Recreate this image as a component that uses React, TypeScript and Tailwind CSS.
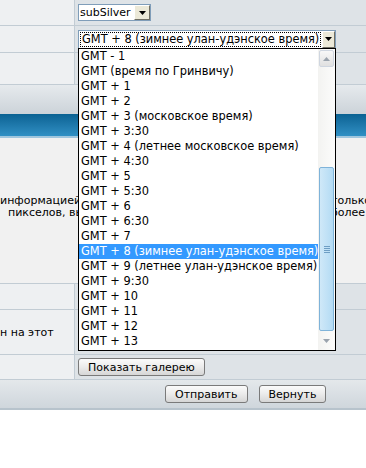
import React from "react";

const zones = [
  "GMT - 1",
  "GMT (время по Гринвичу)",
  "GMT + 1",
  "GMT + 2",
  "GMT + 3 (московское время)",
  "GMT + 3:30",
  "GMT + 4 (летнее московское время)",
  "GMT + 4:30",
  "GMT + 5",
  "GMT + 5:30",
  "GMT + 6",
  "GMT + 6:30",
  "GMT + 7",
  "GMT + 8 (зимнее улан-удэнское время)",
  "GMT + 9 (летнее улан-удэнское время)",
  "GMT + 9:30",
  "GMT + 10",
  "GMT + 11",
  "GMT + 12",
  "GMT + 13",
];

function ArrowBtn() {
  return (
    <div className="w-[16px] h-full bg-[#ece9d8] border border-t-white border-l-white border-r-[#716f64] border-b-[#716f64] flex items-center justify-center">
      <svg width="7" height="4" viewBox="0 0 7 4">
        <path d="M0 0h7L3.5 4z" fill="#000" />
      </svg>
    </div>
  );
}

function Btn({ label }: { label: string }) {
  return (
    <button className="h-[18px] px-[9px] rounded-[3px] border border-[#7a7a7a] bg-gradient-to-b from-[#fbfbfb] via-[#ebebeb] to-[#d6d6d6] text-[11px] leading-none text-black">
      {label}
    </button>
  );
}

function Row({
  h,
  left = "bg-[#eef0f2]",
  right = "bg-[#dee3e7]",
  children,
  leftContent,
}: {
  h: string;
  left?: string;
  right?: string;
  children?: React.ReactNode;
  leftContent?: React.ReactNode;
}) {
  return (
    <div className={`flex ${h} border-b border-[#c2ccd4]`}>
      <div className={`w-[74px] shrink-0 ${left} flex items-center whitespace-nowrap`}>
        {leftContent}
      </div>
      <div className="w-px bg-[#c2ccd4]" />
      <div className={`flex-1 ${right} flex items-center pl-[3px]`}>{children}</div>
    </div>
  );
}

export default function App() {
  return (
    <div className="relative w-[366px] h-[468px] bg-white overflow-hidden text-[11px] text-black [font-family:'DejaVu_Sans',Verdana,sans-serif]">
      <Row h="h-[26px]">
        <div className="flex h-[17px] w-[73px] border border-[#7f9db9] bg-white">
          <span className="flex-1 pl-[1px] leading-[15px]">subSilver</span>
          <ArrowBtn />
        </div>
      </Row>
      <Row h="h-[27px]">
        <div className="flex h-[19px] w-[258px] border border-[#7f9db9] bg-white">
          <span className="flex-1 m-[1px] px-[1px] border border-dotted border-black leading-[13px] text-[11.4px] whitespace-nowrap">
            GMT + 8 (зимнее улан-удэнское время)
          </span>
          <ArrowBtn />
        </div>
      </Row>
      <Row h="h-[32px]" />

      <div className="h-[29px] bg-gradient-to-b from-[#e6eaed] to-[#ccd3d9]" />
      <div className="h-[24px] bg-gradient-to-b from-[#0a6293] to-[#3090c4] border-b-2 border-[#9fc6de]" />

      <div className="flex h-[146px] bg-[#f1f1f1] border-b border-[#c2ccd4] pt-[57px] leading-[12px]">
        <div className="w-[78px] flex flex-col whitespace-nowrap">
          <span>информацией</span>
          <span className="pl-[8px]">пикселов, вы</span>
        </div>
        <div className="ml-[253px] flex flex-col whitespace-nowrap">
          <span>только</span>
          <span>более</span>
        </div>
      </div>

      <Row h="h-[26px]" />
      <Row h="h-[45px]" leftContent={<span className="mt-[3px]">н на этот</span>} />
      <Row h="h-[25px]">
        <Btn label="Показать галерею" />
      </Row>

      <div className="h-[30px] bg-gradient-to-b from-[#e4e8eb] to-[#cfd6dc] border-b-2 border-[#b7c3cc] flex items-center pl-[165px] gap-[11px]">
        <Btn label="Отправить" />
        <Btn label="Вернуть" />
      </div>

      {/* open dropdown list */}
      <div className="absolute left-[78px] top-[48px] w-[258px] h-[303px] border border-black bg-white flex text-[11.4px]">
        <div className="flex-1 flex flex-col">
          {zones.map((z, i) => (
            <div
              key={z}
              className={`h-[15px] leading-[15px] pl-[2px] whitespace-nowrap ${
                i === 13 ? "bg-[#3399ff] text-white" : ""
              }`}
            >
              {z}
            </div>
          ))}
        </div>
        <div className="w-[17px] bg-gradient-to-r from-[#f3f3f1] to-[#fcfcfb] flex flex-col">
          <div className="h-[17px] m-[1px] rounded-[2px] border border-[#cfd6e0] bg-gradient-to-b from-[#f8f8f8] to-[#e0e0e0] flex items-center justify-center">
            <svg width="7" height="4" viewBox="0 0 7 4">
              <path d="M0 4h7L3.5 0z" fill="#9aa3ad" />
            </svg>
          </div>
          <div className="h-[99px]" />
          <div className="h-[164px] mx-[1px] rounded-[2px] border border-[#7fb3d9] bg-gradient-to-r from-[#cfe8f8] to-[#b3dbf4] flex items-center justify-center">
            <div className="flex flex-col gap-[1px] w-[6px]">
              <div className="h-px bg-[#6e9ec4]" />
              <div className="h-px bg-[#6e9ec4]" />
              <div className="h-px bg-[#6e9ec4]" />
              <div className="h-px bg-[#6e9ec4]" />
            </div>
          </div>
          <div className="flex-1 flex items-center justify-center">
            <svg width="7" height="4" viewBox="0 0 7 4">
              <path d="M0 0h7L3.5 4z" fill="#9aa3ad" />
            </svg>
          </div>
        </div>
      </div>
    </div>
  );
}
